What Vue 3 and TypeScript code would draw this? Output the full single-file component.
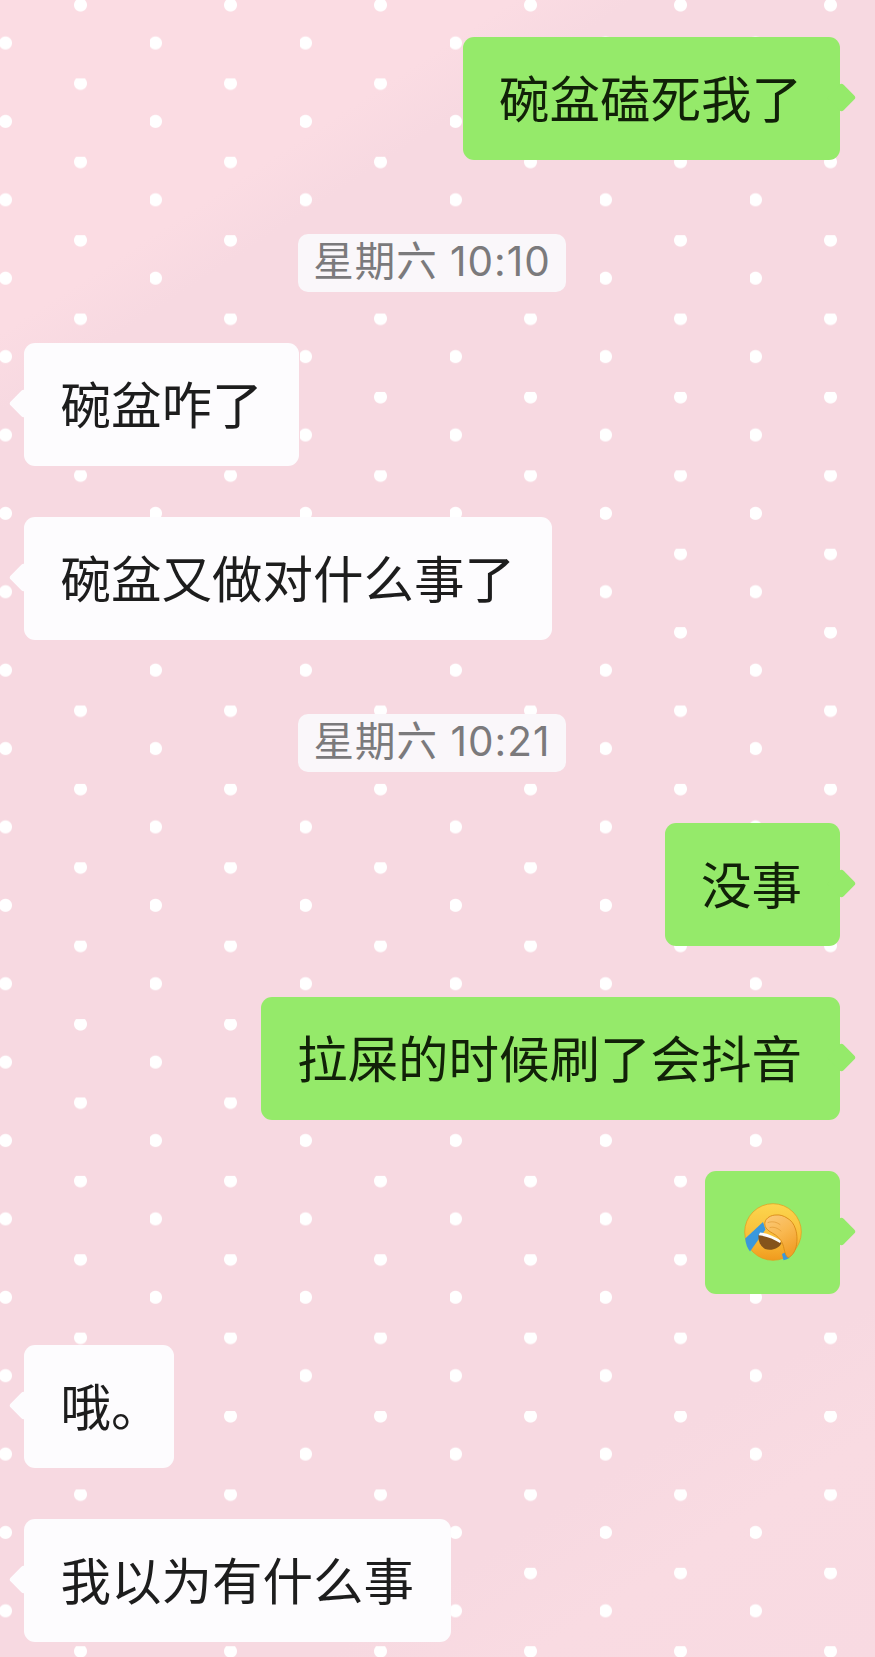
<script setup lang="ts">
type Row =
  | { kind: 'time'; text: string }
  | { kind: 'me' | 'other'; text: string; narrow?: boolean }
  | { kind: 'emoji' }

const rows: Row[] = [
  { kind: 'me', text: '碗盆磕死我了' },
  { kind: 'time', text: '星期六 10:10' },
  { kind: 'other', text: '碗盆咋了' },
  { kind: 'other', text: '碗盆又做对什么事了' },
  { kind: 'time', text: '星期六 10:21' },
  { kind: 'me', text: '没事' },
  { kind: 'me', text: '拉屎的时候刷了会抖音' },
  { kind: 'emoji' },
  { kind: 'other', text: '哦。', narrow: true },
  { kind: 'other', text: '我以为有什么事' },
]
</script>

<template>
  <main class="chat">
    <template v-for="(row, i) in rows" :key="i">
      <div v-if="row.kind === 'time'" class="time-row">
        <span class="time">{{ row.text }}</span>
      </div>
      <div v-else-if="row.kind === 'emoji'" class="row me">
        <div class="bubble emoji-bubble">
          <svg class="emoji" viewBox="0 0 70 70" aria-label="捂脸">
            <defs>
              <linearGradient id="face" x1="0" y1="0" x2="0" y2="1">
                <stop offset="0" stop-color="#fcd64e" />
                <stop offset="0.6" stop-color="#f9bd38" />
                <stop offset="1" stop-color="#f09a1e" />
              </linearGradient>
              <linearGradient id="hand" x1="0" y1="0" x2="0.5" y2="1">
                <stop offset="0" stop-color="#fbca7c" />
                <stop offset="0.55" stop-color="#f9b850" />
                <stop offset="1" stop-color="#f2a02a" />
              </linearGradient>
            </defs>
            <circle cx="35" cy="35" r="28.3" fill="url(#face)" stroke="#e59a1c" stroke-width="0.7" />
            <path d="M25 25 L7.2 41.5 Q7.8 49 12 54.5 L27.5 32.5 Z" fill="#3a98dc" />
            <path d="M20.5 38 C27 38 37 41 43.5 46 C41 52 33 54 27 52 C22 49 20 44 20.5 38 Z" fill="#84531b" />
            <path d="M22 35.5 C29 36 37 39.5 43 43.5 L42 46 C36 42 28 39 20.8 38.2 Z" fill="#fdfdfb" />
            <path d="M44 57 L48 55 L51.5 61 Q48 62.8 45.5 63.2 Z" fill="#3a98dc" />
            <path d="M27 25 C28 21 33 18 38 18 C42 17.5 46 19 49 21 C53 23 56 27 57.5 32 C59.5 38 59.5 46 57.5 52 C56 56 53 60 50 60.5 C47.5 59 46.5 54 45.5 49.5 C44.5 45 42 41.5 37.5 38 C33.5 35.5 30 34 28 31 C26.8 29 26.5 27 27 25 Z" fill="url(#hand)" stroke="#d98a17" stroke-width="0.9" />
            <path d="M30 25.5 C34.5 24 38.5 25 42 27.5 M32 30.5 C36 29.5 39.5 31 43 34" fill="none" stroke="#e09a34" stroke-width="0.7" stroke-linecap="round" />
          </svg>
        </div>
      </div>
      <div v-else class="row" :class="row.kind">
        <div class="bubble" :class="{ narrow: row.narrow }">{{ row.text }}</div>
      </div>
    </template>
  </main>
</template>

<style scoped>
.chat {
  box-sizing: border-box;
  width: 875px;
  height: 1657px;
  overflow: hidden;
  padding: 37px 35px 0 24px;
  display: flex;
  flex-direction: column;
  gap: 51.5px;
  font-family: "Noto Sans CJK SC", "Noto Sans", sans-serif;
  background-color: #f8dae2;
  background-image:
    radial-gradient(circle at 5.5px 43px, #fff 0 6px, rgba(255, 255, 255, 0) 7px),
    radial-gradient(circle at 80.5px 5px, #fff 0 6px, rgba(255, 255, 255, 0) 7px),
    linear-gradient(147deg, #fbdce3 0, #fbdce3 15%, #f7d9e1 18.5%, #f7d9e1 84%, #f9dbe2 90%, #f8dae2 100%);
  background-size: 150px 78.4px, 150px 78.4px, 100% 100%;
}

.row {
  display: flex;
}

.row.me {
  justify-content: flex-end;
}

.row.other {
  justify-content: flex-start;
}

.bubble {
  position: relative;
  box-sizing: border-box;
  height: 122.5px;
  padding: 0 36.5px 4px;
  display: flex;
  align-items: center;
  font-size: 50.5px;
  line-height: 1;
  white-space: nowrap;
  border-radius: 11px;
}

.me .bubble {
  padding-left: 36.5px;
  padding-right: 38px;
}

.bubble.narrow {
  width: 150px;
  padding-right: 0;
}

.bubble::after {
  content: "";
  position: absolute;
  top: 50px;
  width: 21px;
  height: 21px;
  border-radius: 3px;
  transform: rotate(45deg);
  background: inherit;
}

.me .bubble {
  background: #95ea6a;
  color: #112108;
}

.me .bubble::after {
  right: -11.5px;
}

.other .bubble {
  background: #fdfcfe;
  color: #1d1d1d;
}

.other .bubble::after {
  left: -11.5px;
}

.me .emoji-bubble {
  padding: 0 36.5px;
}

.emoji {
  width: 70px;
  height: 70px;
  margin: 0 -4px;
  display: block;
}

.time-row {
  display: flex;
  justify-content: center;
  margin-top: 22.5px;
}

.time {
  box-sizing: border-box;
  height: 58px;
  width: 268px;
  display: flex;
  align-items: center;
  justify-content: center;
  font-family: Inter, "Noto Sans CJK SC", sans-serif;
  font-size: 40.5px;
  letter-spacing: 1px;
  line-height: 1;
  white-space: nowrap;
  color: #7b7a7c;
  background: #faf7fa;
  border-radius: 10px;
}
</style>
